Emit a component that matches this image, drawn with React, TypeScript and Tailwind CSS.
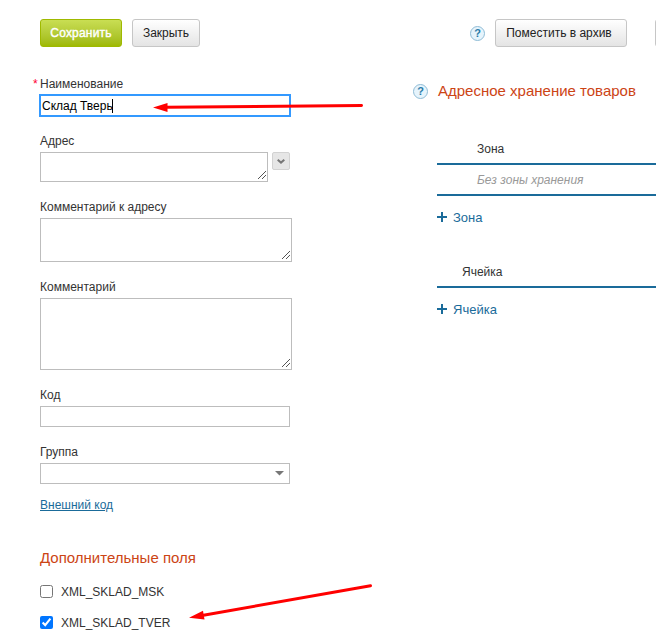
import React from 'react';
import clsx from 'clsx';

const ResizeGrip: React.FC = () => (
  <svg className="absolute right-px bottom-px" width="9" height="9" viewBox="0 0 9 9" shapeRendering="crispEdges">
    <path d="M0.5 8.5L8.5 0.5M4.5 8.5L8.5 4.5" stroke="#555" strokeWidth="1" />
  </svg>
);

const HelpIcon: React.FC = () => (
  <span className="flex h-[15px] w-[15px] shrink-0 items-center justify-center rounded-full border border-[#8fbcd6] bg-[#e6f4fc] text-[11px] leading-none font-bold text-[#2a7ba8]">
    ?
  </span>
);

const PlusIcon: React.FC = () => (
  <svg width="10" height="10" viewBox="0 0 10 10" shapeRendering="crispEdges">
    <path d="M4 0h2v4h4v2H6v4H4V6H0V4h4z" fill="#1a6b9a" />
  </svg>
);

type FieldProps = {
  label: string;
  required?: boolean;
  children: React.ReactNode;
};

const Field: React.FC<FieldProps> = ({ label, required, children }) => (
  <div className="mb-[17px]">
    <div className="relative mb-[3px] h-4 leading-4">
      {required && <span className="absolute -left-[7px] text-[#ff0033]">*</span>}
      {label}
    </div>
    {children}
  </div>
);

const TextArea: React.FC<{ className: string }> = ({ className }) => (
  <div className={clsx('relative border border-[#bdbdbd] bg-white', className)}>
    <ResizeGrip />
  </div>
);

const AddLink: React.FC<{ label: string }> = ({ label }) => (
  <a className="flex h-4 items-center gap-[6px] text-[13px] leading-4 text-[#1a6b9a]">
    <PlusIcon />
    <span className="pt-[2px]">{label}</span>
  </a>
);

const grayButton =
  'h-7 shrink-0 rounded-[3px] border border-[#c6c6c6] bg-gradient-to-b from-white to-[#e4e4e4] text-[12px] text-[#222]';

const extraFields = [
  { name: 'XML_SKLAD_MSK', checked: false },
  { name: 'XML_SKLAD_TVER', checked: true },
];

const App: React.FC = () => {
  return (
    <div className="relative h-[643px] w-[656px] overflow-hidden bg-white font-['Liberation_Sans',Arial,sans-serif] text-[12px] text-[#333]">
      <header className="flex h-[76px] items-start pt-[19px] pl-10">
        <button className="h-7 w-[82px] shrink-0 rounded-[3px] border border-[#9fb900] bg-gradient-to-b from-[#c9de53] to-[#9fb900] text-[12px] tracking-[0.2px] text-white [-webkit-text-stroke:0.4px_white]">
          Сохранить
        </button>
        <button className={clsx(grayButton, 'ml-[10px] w-[68px]')}>Закрыть</button>
        <div className="ml-[270px] flex h-7 shrink-0 items-center">
          <HelpIcon />
        </div>
        <button className={clsx(grayButton, 'ml-[10px] w-[132px] pr-1')}>Поместить в архив</button>
        <button className={clsx(grayButton, 'ml-7 w-20')} />
      </header>

      <div className="flex">
        <main className="w-[413px] shrink-0 pl-10">
          <Field label="Наименование" required>
            <div className="-mt-px -mb-px -ml-px flex h-[23px] w-[252px] items-center border-2 border-[#3399ff] bg-white pl-px text-black">
              Склад Тверь
              <span className="-ml-px h-[14px] w-px bg-black" />
            </div>
          </Field>
          <Field label="Адрес">
            <div className="flex items-start gap-1">
              <TextArea className="h-[30px] w-[228px]" />
              <button className="flex h-[18px] w-[18px] items-center justify-center rounded-[2px] border border-[#d2d2d2] bg-[#e6e6e6]">
                <svg width="8" height="5" viewBox="0 0 8 5">
                  <path d="M0.7 0.8L4 3.6L7.3 0.8" fill="none" stroke="#777" strokeWidth="2" />
                </svg>
              </button>
            </div>
          </Field>
          <Field label="Комментарий к адресу">
            <TextArea className="h-11 w-[252px]" />
          </Field>
          <Field label="Комментарий">
            <TextArea className="h-[72px] w-[252px]" />
          </Field>
          <Field label="Код">
            <div className="h-[21px] w-[250px] border border-[#bdbdbd]" />
          </Field>
          <Field label="Группа">
            <div className="flex h-[21px] w-[250px] items-center justify-end border border-[#bdbdbd] pr-[5px]">
              <svg width="9" height="5" viewBox="0 0 9 5">
                <path d="M0 0h9L4.500 4.500z" fill="#777" />
              </svg>
            </div>
          </Field>
          <a className="-mt-1 block h-4 leading-4 text-[#1a6b9a] underline">Внешний код</a>

          <h2 className="mt-[35px] h-5 text-[15px] leading-5 text-[#cc4415]">Дополнительные поля</h2>
          <div className="mt-4 flex flex-col gap-[15px]">
            {extraFields.map((field) => (
              <label key={field.name} className="flex h-4 items-start gap-2 leading-4">
                <input type="checkbox" className="mt-px h-[13px] w-[13px]" defaultChecked={field.checked} />
                {field.name}
              </label>
            ))}
          </div>
        </main>

        <aside className="w-[243px] shrink-0 pt-[5px]">
          <div className="flex h-5 items-center gap-[10px]">
            <HelpIcon />
            <h2 className="text-[15px] leading-5 whitespace-nowrap text-[#cc4415]">Адресное хранение товаров</h2>
          </div>
          <section className="ml-6 pt-10">
            <div className="h-6 border-b-2 border-[#1a6b9a] pl-10 leading-4">Зона</div>
            <div className="h-[31px] border-b-2 border-[#1a6b9a] pl-10 leading-[31px] text-[#999] italic">
              Без зоны хранения
            </div>
            <div className="pt-[13px]">
              <AddLink label="Зона" />
            </div>
          </section>
          <section className="ml-6 pt-[39px]">
            <div className="h-6 border-b-2 border-[#1a6b9a] pl-[25px] leading-4">Ячейка</div>
            <div className="pt-[13px]">
              <AddLink label="Ячейка" />
            </div>
          </section>
        </aside>
      </div>

      {/* Red pointer arrows over the form */}
      <svg className="pointer-events-none absolute inset-0" width="656" height="643" viewBox="0 0 656 643">
        <g fill="#ff0000" stroke="#ff0000">
          <path d="M166 107.3L361.5 105.5" strokeWidth="3" strokeLinecap="round" />
          <path d="M153 107.5L167.5 103V112z" stroke="none" />
          <path d="M202 615.5L370.5 585.7" strokeWidth="3" strokeLinecap="round" />
          <path d="M189 617.7L203 610.7L204.5 619.5z" stroke="none" />
        </g>
      </svg>
    </div>
  );
};

export default App;
